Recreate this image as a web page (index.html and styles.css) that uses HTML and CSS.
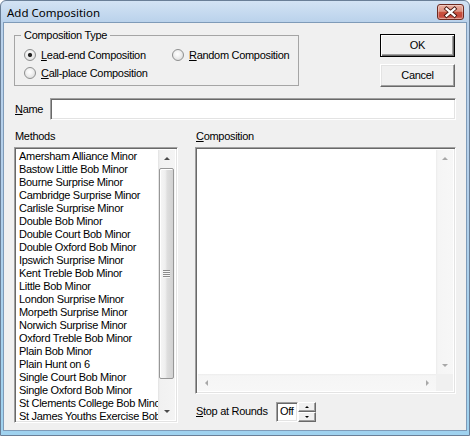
FILE: index.html
```html
<!DOCTYPE html>
<html>
<head>
<meta charset="utf-8">
<title>Add Composition</title>
<link rel="stylesheet" href="styles.css">
</head>
<body>
<div class="window">
  <div class="titlebar">
    <span class="title">Add Composition</span>
    <div class="close">
      <svg width="27" height="16" viewBox="0 0 27 16">
        <path d="M9.5 4.8 L17.5 11.6 M17.5 4.8 L9.5 11.6" stroke="#4a1812" stroke-width="4" stroke-linecap="square" fill="none"/>
        <path d="M9.5 4.8 L17.5 11.6 M17.5 4.8 L9.5 11.6" stroke="#ffffff" stroke-width="2.2" stroke-linecap="square" fill="none"/>
      </svg>
    </div>
  </div>
  <div class="client">
    <div class="top-row">
      <fieldset class="group">
        <legend>Composition Type</legend>
        <div class="radio-grid">
          <div class="radio checked"><span class="radio-dot"></span><span><u>L</u>ead-end Composition</span></div>
          <div class="radio"><span class="radio-dot"></span><span><u>R</u>andom Composition</span></div>
          <div class="radio"><span class="radio-dot"></span><span><u>C</u>all-place Composition</span></div>
        </div>
      </fieldset>
      <div class="buttons">
        <div class="btn default">OK</div>
        <div class="btn">Cancel</div>
      </div>
    </div>
    <div class="name-row">
      <span class="name-label"><u>N</u>ame</span>
      <div class="sunken name-field"></div>
    </div>
    <div class="panes">
      <div class="pane">
        <div class="label">Methods</div>
        <div class="sunken listbox">
          <div class="items">
            <div>Amersham Alliance Minor</div>
            <div>Bastow Little Bob Minor</div>
            <div>Bourne Surprise Minor</div>
            <div>Cambridge Surprise Minor</div>
            <div>Carlisle Surprise Minor</div>
            <div>Double Bob Minor</div>
            <div>Double Court Bob Minor</div>
            <div>Double Oxford Bob Minor</div>
            <div>Ipswich Surprise Minor</div>
            <div>Kent Treble Bob Minor</div>
            <div>Little Bob Minor</div>
            <div>London Surprise Minor</div>
            <div>Morpeth Surprise Minor</div>
            <div>Norwich Surprise Minor</div>
            <div>Oxford Treble Bob Minor</div>
            <div>Plain Bob Minor</div>
            <div>Plain Hunt on 6</div>
            <div>Single Court Bob Minor</div>
            <div>Single Oxford Bob Minor</div>
            <div>St Clements College Bob Minor</div>
            <div>St James Youths Exercise Bob Minor</div>
          </div>
          <div class="vscroll">
            <div class="sb-btn"><span class="arr up"></span></div>
            <div class="sb-track">
              <div class="thumb"><span class="grip"></span></div>
            </div>
            <div class="sb-btn"><span class="arr down"></span></div>
          </div>
        </div>
      </div>
      <div class="pane">
        <div class="label"><u>C</u>omposition</div>
        <div class="sunken memo">
          <div class="memo-text"></div>
          <div class="memo-v">
            <div class="sb-btn"><span class="arr up dis"></span></div>
            <div class="sb-btn"><span class="arr down dis"></span></div>
          </div>
          <div class="memo-h">
            <div class="sb-btn"><span class="arr left dis"></span></div>
            <div class="sb-btn"><span class="arr right dis"></span></div>
          </div>
          <div class="corner"></div>
        </div>
        <div class="stop-row">
          <span class="stop-label"><u>S</u>top at Rounds</span>
          <div class="sunken spin-edit">Off</div>
          <div class="spin-btns">
            <div class="spin-btn"><span class="tiny up"></span></div>
            <div class="spin-btn"><span class="tiny down"></span></div>
          </div>
        </div>
      </div>
    </div>
  </div>
</div>
</body>
</html>
```

FILE: styles.css
```css
* { box-sizing: border-box; }
html, body { margin: 0; padding: 0; background: #ffffff; }
body {
  width: 470px;
  height: 436px;
  overflow: hidden;
  font-family: "Liberation Sans", Arial, sans-serif;
  font-size: 11px;
  letter-spacing: -0.3px;
  color: #000;
}
u { text-decoration: underline; text-underline-offset: 1px; }

.window {
  width: 470px;
  height: 436px;
  border: 1px solid #6a7f97;
  border-radius: 6px 6px 0 0;
  background: linear-gradient(to bottom, #d3e3f4 0, #bad2eb 21px, #b3cfea 180px, #9fd2ef 100%);
  padding: 0 3px 5px 3px;
  display: flex;
  flex-direction: column;
}

.titlebar {
  height: 22px;
  flex: none;
  display: flex;
  align-items: center;
  padding-left: 3px;
  padding-right: 2px;
}
.title {
  font-family: "Noto Sans", "Open Sans", sans-serif;
  font-size: 11.5px;
  letter-spacing: 0;
  color: #000;
  padding-top: 1px;
}
.close {
  margin-left: auto;
  width: 27px;
  height: 16px;
  border: 1px solid #6d2a21;
  border-radius: 3px;
  background: linear-gradient(to bottom, #eab0a2 0%, #dd9181 45%, #c9523f 52%, #c4463a 80%, #d57a6b 100%);
  box-shadow: inset 0 0 0 1px rgba(255, 255, 255, 0.35);
  display: flex;
}
.close svg { margin: -1px; display: block; }

.client {
  width: 462px;
  height: 407px;
  flex: none;
  background: #f0f0f0;
  box-shadow: 0 0 0 1px #7f9bb8;
  padding: 6px 10px 0 10px;
}

.top-row {
  display: flex;
  align-items: flex-start;
}
.group {
  margin: 0;
  width: 285px;
  min-width: 0;
  border: 1px solid #a5a5a5;
  padding: 4px 0 3px 9px;
}
.group legend {
  padding: 0 3px;
  margin-left: -3px;
  line-height: 13px;
  font-size: 11px;
}
.radio-grid {
  display: grid;
  grid-template-columns: 148px auto;
  grid-auto-rows: 18px;
}
.radio {
  display: flex;
  align-items: center;
  gap: 5px;
  white-space: nowrap;
}
.radio-dot {
  flex: none;
  width: 12px;
  height: 12px;
  border-radius: 50%;
  border: 1px solid #8e8f8f;
  background: radial-gradient(circle at 45% 40%, #ffffff 0, #f3f3f3 35%, #d4d4d4 100%);
}
.radio.checked .radio-dot {
  background:
    radial-gradient(circle at 50% 50%, #1a1a1a 0, #2a2a2a 1.6px, rgba(40,40,40,0) 2.6px),
    radial-gradient(circle at 45% 40%, #ffffff 0, #f3f3f3 35%, #d4d4d4 100%);
}

.buttons {
  margin-left: auto;
  margin-top: 5px;
  margin-right: 1px;
  display: flex;
  flex-direction: column;
  gap: 7px;
}
.btn {
  width: 75px;
  height: 23px;
  display: flex;
  align-items: center;
  justify-content: center;
  background: #f0f0f0;
  border: 1px solid;
  border-color: #ffffff #696969 #696969 #ffffff;
  box-shadow: inset -1px -1px #a0a0a0, inset 1px 1px #e3e3e3;
  padding-bottom: 1px;
}
.btn.default {
  border: 1px solid #000000;
  box-shadow: inset 1px 1px #ffffff, inset -1px -1px #696969, inset -2px -2px #a0a0a0;
}

.sunken {
  border: 1px solid;
  border-color: #a0a0a0 #ffffff #ffffff #a0a0a0;
  box-shadow: inset 1px 1px #696969, inset -1px -1px #e3e3e3;
  background: #ffffff;
}

.name-row {
  margin-top: 11px;
  display: flex;
  align-items: center;
  height: 22px;
}
.name-label {
  width: 35px;
  margin-left: 1px;
  flex: none;
}
.name-field {
  flex: 1;
  height: 22px;
}

.panes {
  margin-top: 10px;
  display: grid;
  grid-template-columns: 164px 261px;
  column-gap: 17px;
}
.label {
  height: 13px;
  line-height: 13px;
  margin-left: 1px;
  margin-bottom: 4px;
}

.listbox {
  height: 276px;
  display: flex;
  padding: 2px;
}
.items {
  flex: 1;
  overflow: hidden;
  white-space: nowrap;
  line-height: 13px;
  padding-left: 2px;
}
.vscroll {
  width: 17px;
  flex: none;
  display: flex;
  flex-direction: column;
  background: linear-gradient(to right, #e2e2e2 0, #f1f1f1 2px, #f4f4f4 100%);
}
.sb-btn {
  width: 17px;
  height: 17px;
  flex: none;
  display: flex;
  align-items: center;
  justify-content: center;
}
.sb-track {
  flex: 1;
  padding-top: 1px;
}
.thumb {
  height: 211px;
  margin: 0 1px;
  border: 1px solid #979797;
  border-radius: 2px;
  background: linear-gradient(to right, #f6f6f6 0%, #efefef 40%, #dedede 55%, #d2d2d2 100%);
  box-shadow: inset 1px 1px #ffffff;
  display: flex;
  align-items: center;
  justify-content: center;
}
.grip {
  width: 7px;
  height: 8px;
  background: repeating-linear-gradient(to bottom, #8c8c8c 0, #8c8c8c 1px, #f8f8f8 1px, #f8f8f8 2px);
}
.arr { width: 0; height: 0; display: block; }
.arr.up { border-left: 3px solid transparent; border-right: 3px solid transparent; border-bottom: 3px solid #4a4a4a; }
.arr.down { border-left: 3px solid transparent; border-right: 3px solid transparent; border-top: 3px solid #4a4a4a; }
.arr.left { border-top: 3px solid transparent; border-bottom: 3px solid transparent; border-right: 3px solid #4a4a4a; }
.arr.right { border-top: 3px solid transparent; border-bottom: 3px solid transparent; border-left: 3px solid #4a4a4a; }
.arr.up.dis { border-bottom-color: #a8a8a8; }
.arr.down.dis { border-top-color: #a8a8a8; }
.arr.left.dis { border-right-color: #a8a8a8; }
.arr.right.dis { border-left-color: #a8a8a8; }

.memo {
  height: 247px;
  padding: 2px;
  display: grid;
  grid-template-columns: 1fr 17px;
  grid-template-rows: 1fr 17px;
}
.memo-text { background: #ffffff; }
.memo-v {
  display: flex;
  flex-direction: column;
  justify-content: space-between;
  background: linear-gradient(to right, #ececec 0, #f5f5f5 2px, #f7f7f7 100%);
}
.memo-h {
  display: flex;
  justify-content: space-between;
  background: linear-gradient(to bottom, #ececec 0, #f5f5f5 2px, #f7f7f7 100%);
}
.corner { background: #f0f0f0; }

.stop-row {
  margin-top: 8px;
  height: 20px;
  display: flex;
  align-items: center;
}
.stop-label {
  width: 80px;
  margin-left: 1px;
  flex: none;
  margin-top: -2px;
}
.spin-edit {
  width: 22px;
  height: 20px;
  flex: none;
  padding-left: 3px;
  line-height: 17px;
}
.spin-btns {
  width: 18px;
  height: 20px;
  flex: none;
  display: flex;
  flex-direction: column;
}
.spin-btn {
  height: 10px;
  background: #f0f0f0;
  border: 1px solid;
  border-color: #ffffff #696969 #696969 #ffffff;
  box-shadow: inset -1px -1px #a0a0a0;
  display: flex;
  align-items: center;
  justify-content: center;
}
.tiny { display: block; width: 0; height: 0; }
.tiny.up { border-left: 2px solid transparent; border-right: 2px solid transparent; border-bottom: 2px solid #000; }
.tiny.down { border-left: 2px solid transparent; border-right: 2px solid transparent; border-top: 2px solid #000; }
```
